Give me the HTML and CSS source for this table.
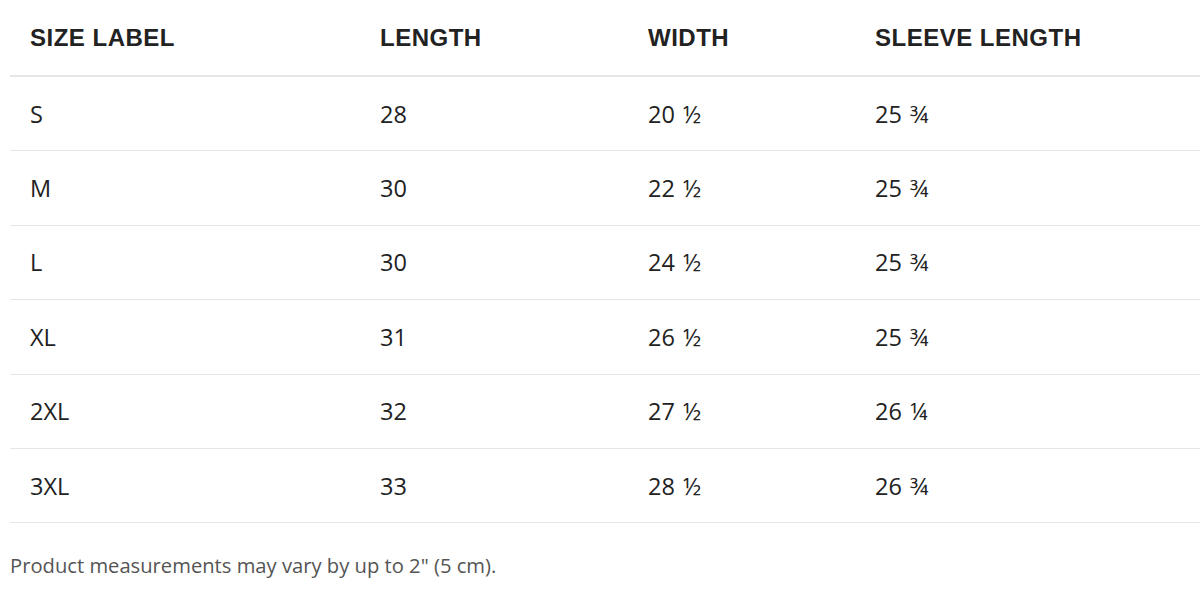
FILE: index.html
```html
<!DOCTYPE html>
<html lang="en">
<head>
<meta charset="utf-8">
<title>Size guide</title>
<link rel="stylesheet" href="styles.css">
</head>
<body>
<div class="size-guide">
  <table class="size-table">
    <colgroup>
      <col class="c1"><col class="c2"><col class="c3"><col class="c4">
    </colgroup>
    <thead>
      <tr><th>SIZE LABEL</th><th>LENGTH</th><th>WIDTH</th><th>SLEEVE LENGTH</th></tr>
    </thead>
    <tbody>
      <tr><td>S</td><td>28</td><td>20 ½</td><td>25 ¾</td></tr>
      <tr><td>M</td><td>30</td><td>22 ½</td><td>25 ¾</td></tr>
      <tr><td>L</td><td>30</td><td>24 ½</td><td>25 ¾</td></tr>
      <tr><td>XL</td><td>31</td><td>26 ½</td><td>25 ¾</td></tr>
      <tr><td>2XL</td><td>32</td><td>27 ½</td><td>26 ¼</td></tr>
      <tr><td>3XL</td><td>33</td><td>28 ½</td><td>26 ¾</td></tr>
    </tbody>
  </table>
  <p class="note">Product measurements may vary by up to 2" (5 cm).</p>
</div>
</body>
</html>
```

FILE: styles.css
```css
html, body {
  margin: 0;
  padding: 0;
  background: #fff;
}

.size-guide {
  padding: 0 0 0 10px;
  overflow: hidden;
}

.size-table {
  border-collapse: separate;
  border-spacing: 0;
  width: 1200px;
  table-layout: fixed;
  font-family: "Open Sans", Lato, sans-serif;
  color: #222;
}

.c1 { width: 350px; }
.c2 { width: 268px; }
.c3 { width: 227px; }
.c4 { width: 355px; }

.size-table th {
  font-family: "Liberation Sans", Arial, sans-serif;
  font-weight: bold;
  font-size: 24px;
  letter-spacing: 0.5px;
  text-align: left;
  color: #222;
  height: 77px;
  padding: 0 0 0 20px;
  box-sizing: border-box;
  border-bottom: 2px solid #e6e6e6;
  vertical-align: middle;
}

.size-table td {
  font-size: 23.5px;
  word-spacing: 2px;
  height: 74.4px;
  padding: 0 0 0 20px;
  box-sizing: border-box;
  border-bottom: 1px solid #e6e6e6;
  vertical-align: middle;
}

.note {
  margin: 28px 0 0 0;
  font-family: "Open Sans", Lato, sans-serif;
  font-size: 20.2px;
  color: #555;
}
```
